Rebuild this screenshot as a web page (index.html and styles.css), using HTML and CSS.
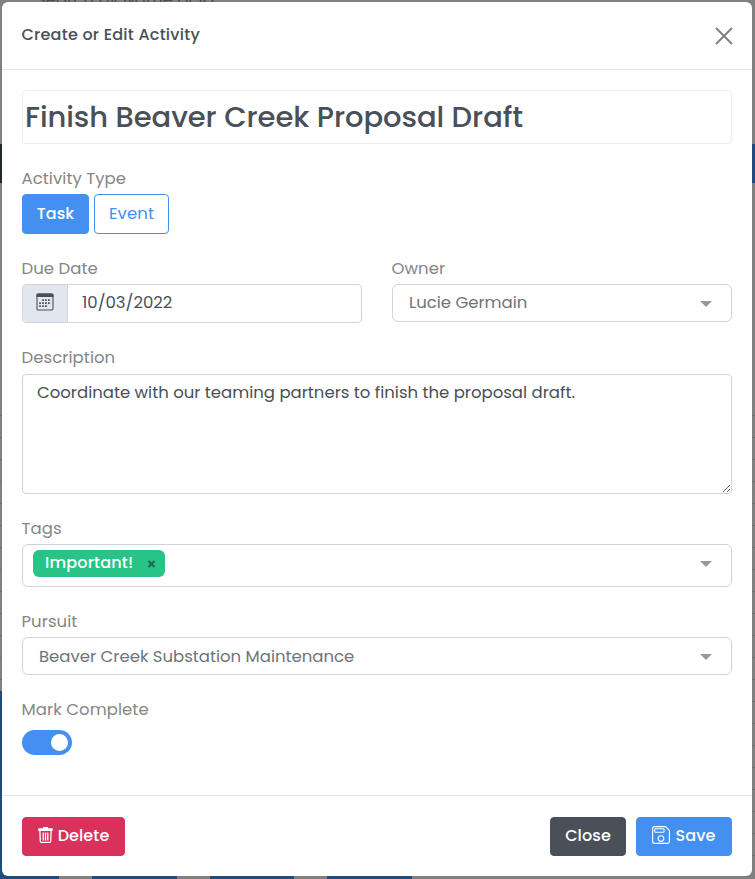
FILE: index.html
```html
<!DOCTYPE html>
<html lang="en">
<head>
<meta charset="utf-8">
<title>Create or Edit Activity</title>
<link rel="stylesheet" href="styles.css">
</head>
<body>
<div class="page">
  <div class="page-search">Search by Name or ID</div>
  <div class="page-bar"><span class="bar-dark"></span><span class="bar-blue"></span></div>
  <div class="page-gap"></div>
  <div class="page-grid"></div>
  <div class="page-lower"><span class="side"></span></div>
  <div class="page-strip"><i class="first"></i><i></i><i></i><i></i></div>
</div>
<div class="modal">
  <header class="modal-header">
    <h1 class="heading">Create or Edit Activity</h1>
    <svg class="close-x" viewBox="0 0 18 18"><path d="M1 1L17 17M17 1L1 17"/></svg>
  </header>
  <main class="modal-body">
    <div class="title-input">Finish Beaver Creek Proposal Draft</div>
    <section class="field type-field">
      <label>Activity Type</label>
      <div class="buttons"><button class="btn task">Task</button><button class="btn event">Event</button></div>
    </section>
    <div class="columns">
      <section class="field">
        <label>Due Date</label>
        <div class="date">
          <span class="addon"><svg class="calendar" viewBox="0 0 18 18"><rect x="1" y="1" width="16" height="16" rx="1.2"/><path class="top" d="M.5 4V2Q.5 .5 2 .5H16Q17.5 .5 17.5 2V4Z"/><path class="dots" d="M6.2 7.2H15M3.2 10.2H15M3.2 13.2H12"/></svg></span>
          <span class="date-value">10/03/2022</span>
        </div>
      </section>
      <section class="field">
        <label>Owner</label>
        <div class="select"><span>Lucie Germain</span><i class="caret"></i></div>
      </section>
    </div>
    <section class="field desc-field">
      <label>Description</label>
      <textarea class="description">Coordinate with our teaming partners to finish the proposal draft.</textarea>
    </section>
    <section class="field tags-field">
      <label>Tags</label>
      <div class="select tags"><span class="tag"><span>Important!</span><svg class="tag-x" viewBox="0 0 8 8"><path d="M1 1L7 7M7 1L1 7"/></svg></span><i class="caret"></i></div>
    </section>
    <section class="field pursuit-field">
      <label>Pursuit</label>
      <div class="select pursuit"><span>Beaver Creek Substation Maintenance</span><i class="caret"></i></div>
    </section>
    <section class="field">
      <label>Mark Complete</label>
      <div class="toggle"><i></i></div>
    </section>
  </main>
  <footer class="modal-footer">
    <button class="btn delete"><svg class="trash" viewBox="0 0 15 16"><path class="solid" d="M.3 1.2H5V0H10V1.2H14.7V4H.3Z"/><path d="M1.9 4L2.3 14.3Q2.4 15.4 3.4 15.4H11.6Q12.6 15.4 12.7 14.3L13.1 4M5.2 5.5V13.5M7.5 5.5V13.5M9.8 5.5V13.5"/></svg><span>Delete</span></button>
    <button class="btn close">Close</button>
    <button class="btn save"><svg class="disk" viewBox="0 0 18 18"><path d="M2.5 .6H13.5L17.4 4.5V15.5Q17.4 17.4 15.5 17.4H2.5Q.6 17.4 .6 15.5V2.5Q.6 .6 2.5 .6Z"/><rect x="2.7" y="2.8" width="9.4" height="3.4" rx=".6"/><circle cx="9" cy="12.6" r="2.8"/></svg><span>Save</span></button>
  </footer>
</div>
</body>
</html>
```
FILE: styles.css
```css
* { box-sizing: border-box; }
body {
  margin: 0;
  height: 879px;
  overflow: hidden;
  position: relative;
  font: 400 16.5px/24px Poppins, Inter, "Liberation Sans", sans-serif;
  color: #495057;
}
.page { display: flex; flex-direction: column; height: 879px; background: #808080; }
.page-search { height: 156px; margin-top: -12px; padding-left: 36px; color: #4a4d50; }
.page-bar { height: 39px; display: flex; justify-content: space-between; }
.bar-dark { width: 20px; background: #22272c; }
.bar-blue { width: 20px; background: #204a80; }
.page-gap { height: 211px; }
.page-grid { height: 297px; background: repeating-linear-gradient(#808080 0 21px, #6e6e6e 21px 22px); }
.page-lower { height: 185px; display: flex; background: repeating-linear-gradient(#808080 0 10px, #6e6e6e 10px 11px, #808080 11px 22px); }
.side { width: 20px; background: #204a80; }
.page-strip { height: 3px; display: flex; gap: 33px; background: #808080; }
.page-strip i { width: 84.5px; background: #204a80; }
.page-strip .first { width: 59px; }

.modal {
  position: absolute;
  left: 2px;
  top: 2px;
  width: 750px;
  height: 874px;
  background: #fff;
  border-radius: 6px;
  display: flex;
  flex-direction: column;
}
.modal-header {
  height: 68px;
  border-bottom: 1px solid #dee5ee;
  display: flex;
  justify-content: space-between;
  padding: 20px 19.5px 20px 20px;
}
.heading { margin: 1px 0 0 -.5px; font-size: 16px; font-weight: 500; line-height: 24px; letter-spacing: .24px; }
.close-x { width: 18px; height: 18px; margin-top: 4.5px; fill: none; stroke: #808080; stroke-width: 1.9; }
.modal-body { flex: 1; padding: 20px 20px 0; }
.title-input {
  height: 54px;
  border: 1px solid #ededed;
  border-radius: 4px;
  padding: 4px 2px;
  font-size: 29px;
  line-height: 44px;
  font-weight: 500;
  letter-spacing: -.06px;
  white-space: nowrap;
}
.field { display: flex; flex-direction: column; }
label { color: #868686; line-height: 24px; height: 28px; padding-top: 1px; margin-left: -.5px; align-self: flex-start; white-space: nowrap; letter-spacing: .06px; }
.type-field { margin-top: 22px; }
.buttons { display: flex; gap: 5px; }
.btn {
  font: inherit;
  font-size: 16px;
  font-weight: 500;
  letter-spacing: .1px;
  height: 39px;
  border: 1px solid;
  border-radius: 4px;
  padding: 0 0 1px;
  color: #fff;
  display: flex;
  align-items: center;
  justify-content: center;
}
.task { width: 67px; height: 40px; background: #4390f0; border-color: #4390f0; }
.event { width: 75px; height: 40px; background: #fff; border-color: #4390f0; color: #4390f0; font-weight: 400; font-size: 16.5px; }
.columns { display: grid; grid-template-columns: 340px 340px; gap: 30px; margin-top: 22px; }
.date { display: flex; height: 39px; border: 1px solid #ced4da; border-radius: 4px; overflow: hidden; }
.addon { width: 45px; background: #e2e7ef; border-right: 1px solid #ced4da; display: flex; align-items: center; justify-content: center; padding: 0 0 3px; }
.calendar { width: 18px; height: 18px; fill: none; stroke: #495057; stroke-width: 1.1; }
.calendar .top { fill: #495057; stroke: none; }
.calendar .dots { stroke-width: 1.8; stroke-dasharray: 1.7 1.2; }
.date-value { padding-left: 14px; line-height: 35px; }
.select {
  height: 38px;
  border: 1px solid #ced4da;
  border-radius: 6px;
  padding: 0 19.5px 0 16px;
  display: flex;
  align-items: center;
  justify-content: space-between;
  color: #6c757d;
  white-space: nowrap;
}
.select.pursuit { padding-top: 1px; }
.caret { border: 6.5px solid transparent; border-top: 6px solid #999; border-bottom: 0; margin-top: 1px; }
.desc-field { margin-top: 22px; }
.description {
  height: 120px;
  margin: 1px 0 0;
  padding: 6px 14px;
  border: 1px solid #ced4da;
  border-radius: 4px;
  font: inherit;
  color: #495057;
  outline: 0;
}
.tags-field { margin-top: 22px; }
.tags { height: 43px; padding: 0 19.5px 0 10px; }
.tag {
  width: 132px;
  height: 27px;
  margin-bottom: 4px;
  border-radius: 6px;
  background: #28c487;
  color: #fff;
  font-size: 16px;
  font-weight: 500;
  letter-spacing: .2px;
  display: flex;
  align-items: center;
  justify-content: space-between;
  padding: 0 9px 2px 12px;
}
.tag-x { width: 9px; height: 8px; margin-top: 2px; stroke: #1b6f50; stroke-width: 2.2; fill: none; }
.tags .caret { margin-top: 0; margin-bottom: 3px; }
.pursuit-field { margin-top: 22px; margin-bottom: 22px; }
.toggle { width: 50px; height: 25px; margin-top: 5px; border-radius: 13px; background: #4390f0; display: flex; justify-content: flex-end; align-items: center; padding-right: 4px; }
.toggle i { width: 17px; height: 17px; border-radius: 50%; background: #fff; }
.modal-footer { height: 81px; border-top: 1px solid #dee5ee; padding: 21px 20px 0; display: flex; gap: 10px; }
.delete { width: 103px; background: #d8315b; border-color: #d8315b; margin-right: auto; gap: 5px; }
.close { width: 76px; background: #495057; border-color: #495057; }
.save { width: 96px; background: #4390f0; border-color: #4390f0; gap: 5px; }
.btn svg { fill: none; stroke: #fff; stroke-width: 1.1; }
.trash { width: 15px; height: 16px; margin-bottom: 3px; }
.btn .trash { stroke-width: 1.3; }
.trash .solid { fill: #fff; stroke: none; }
.disk { width: 18px; height: 18px; margin-bottom: 2px; }
```
